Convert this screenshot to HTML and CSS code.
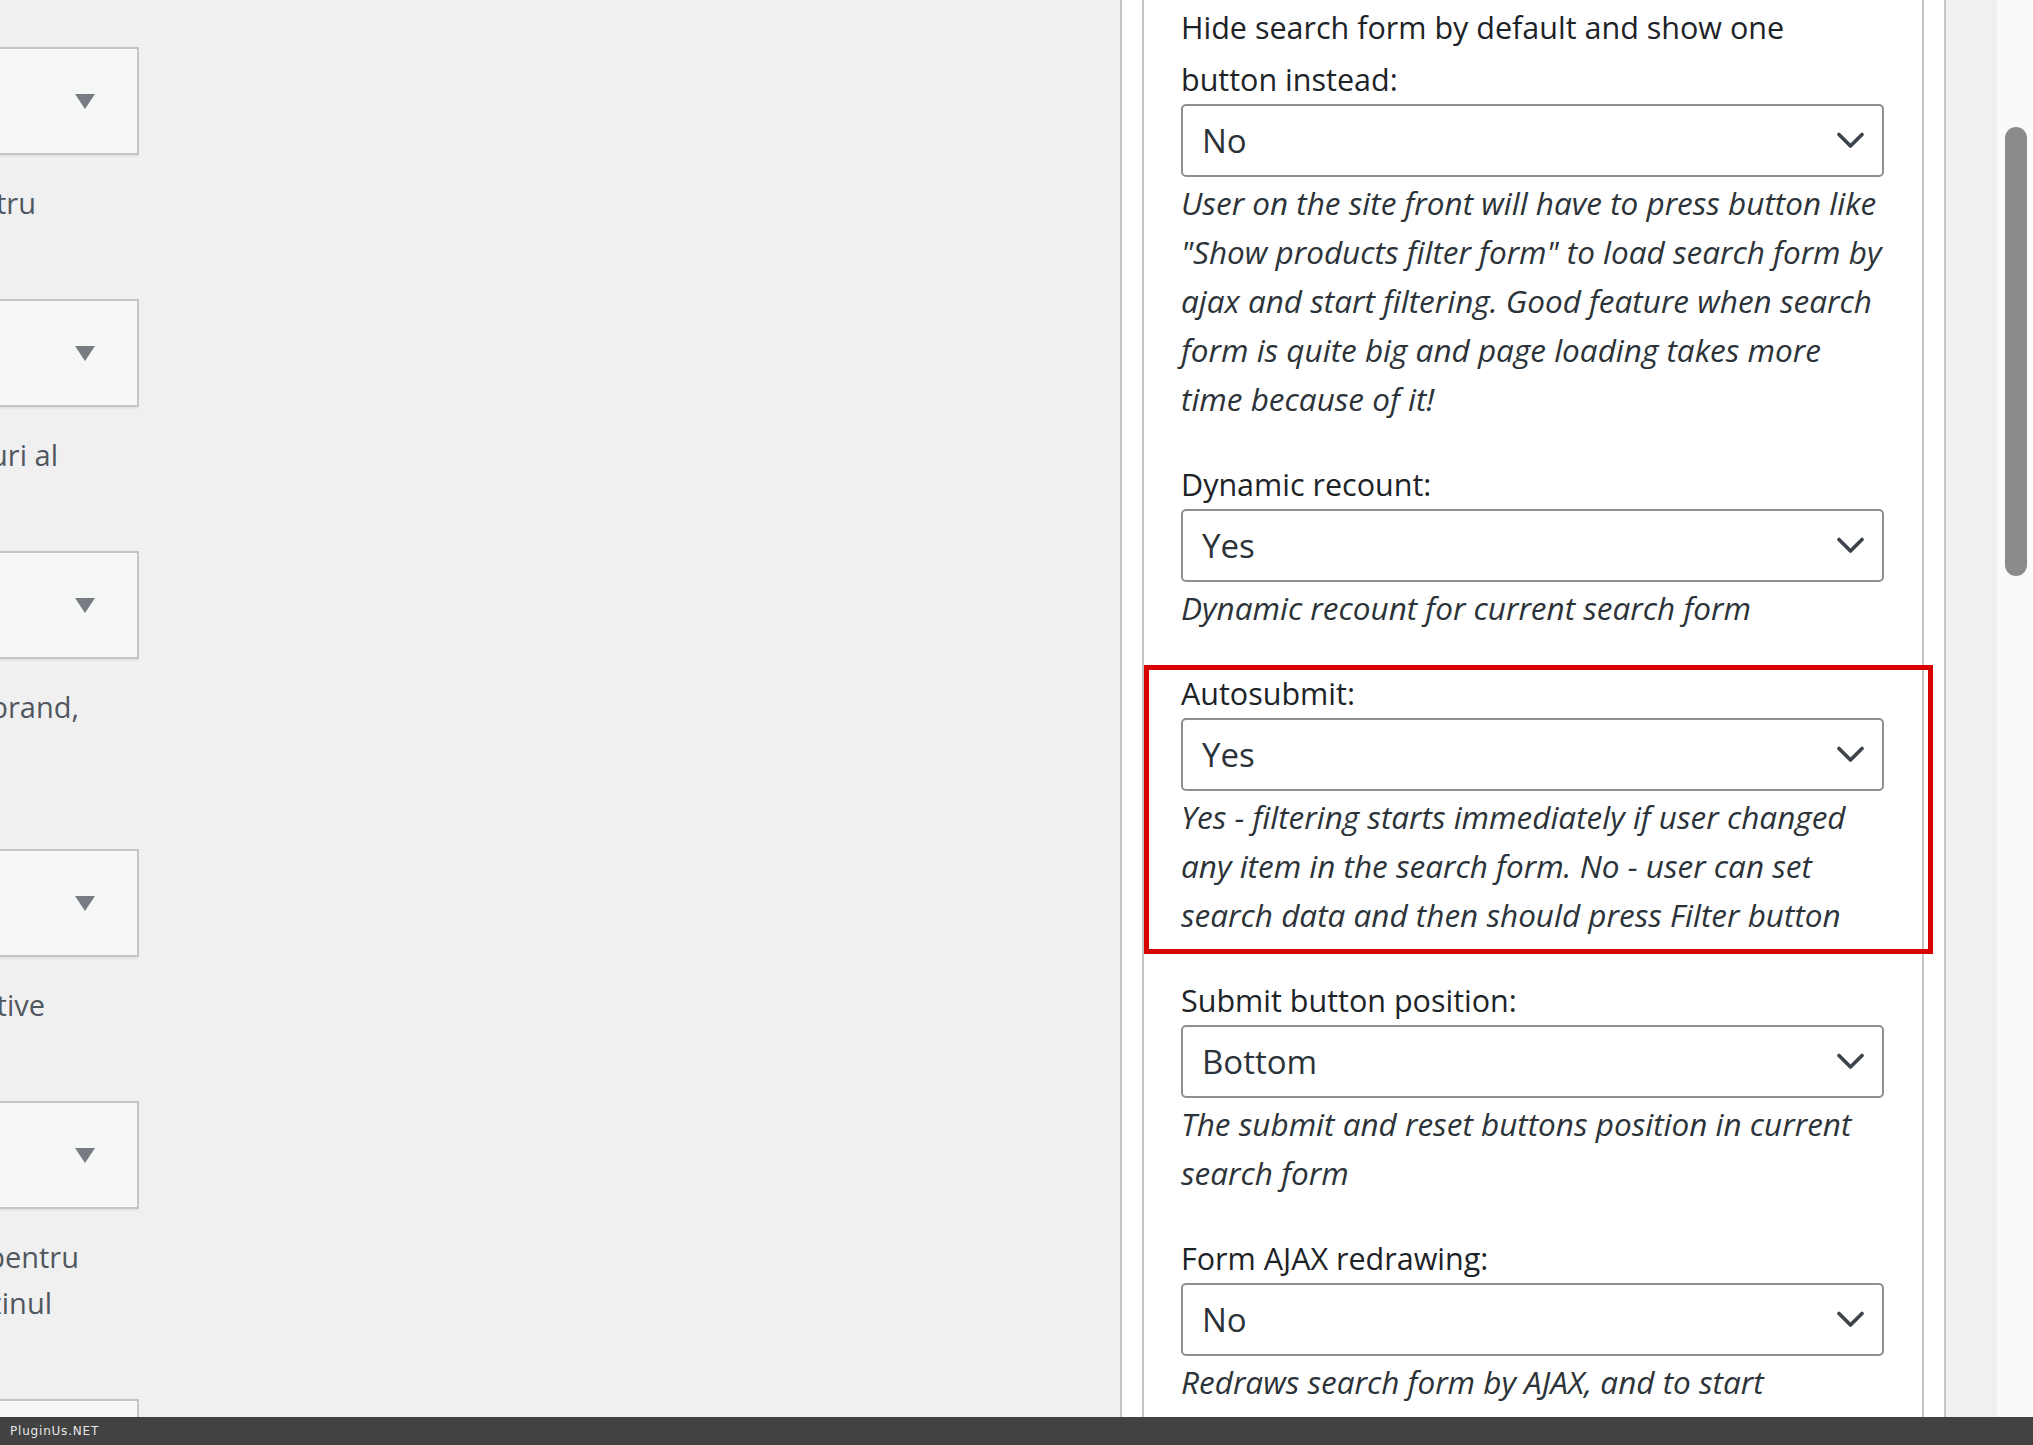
FILE: index.html
```html
<!DOCTYPE html>
<html lang="en">
<head>
<meta charset="utf-8">
<title>Search form settings</title>
<link rel="stylesheet" href="styles.css">
</head>
<body>
<div class="screen">
  <div class="page">
    <aside class="left-col">
      <div class="lsel"><span class="lsel-arrow"></span></div>
      <div class="note"><div class="note-line end-36">pentru</div></div>

      <div class="lsel"><span class="lsel-arrow"></span></div>
      <div class="note"><div class="note-line end-58">produsuri al</div></div>

      <div class="lsel"><span class="lsel-arrow"></span></div>
      <div class="note two-lines"><div class="note-line end-79">brand,</div></div>

      <div class="lsel"><span class="lsel-arrow"></span></div>
      <div class="note"><div class="note-line end-45">alternative</div></div>

      <div class="lsel"><span class="lsel-arrow"></span></div>
      <div class="note"><div class="note-line end-79">pentru</div><div class="note-line end-52">magazinul</div></div>

      <div class="lsel"><span class="lsel-arrow"></span></div>
    </aside>

    <main class="panel">
      <div class="panel-inner">
        <div class="field">
          <label class="field-label">Hide search form by default and show one button instead:</label>
          <div class="select"><span>No</span><svg class="chevron" viewBox="0 0 27 17"><polyline points="2,2.5 13.5,14 25,2.5"/></svg></div>
          <p class="field-desc">User on the site front will have to press button like<br>"Show products filter form" to load search form by<br>ajax and start filtering. Good feature when search<br>form is quite big and page loading takes more<br>time because of it!</p>
        </div>

        <div class="field">
          <label class="field-label">Dynamic recount:</label>
          <div class="select"><span>Yes</span><svg class="chevron" viewBox="0 0 27 17"><polyline points="2,2.5 13.5,14 25,2.5"/></svg></div>
          <p class="field-desc">Dynamic recount for current search form</p>
        </div>

        <div class="field">
          <label class="field-label">Autosubmit:</label>
          <div class="select"><span>Yes</span><svg class="chevron" viewBox="0 0 27 17"><polyline points="2,2.5 13.5,14 25,2.5"/></svg></div>
          <p class="field-desc">Yes - filtering starts immediately if user changed<br>any item in the search form. No - user can set<br>search data and then should press Filter button</p>
          <div class="highlight"></div>
        </div>

        <div class="field">
          <label class="field-label">Submit button position:</label>
          <div class="select"><span>Bottom</span><svg class="chevron" viewBox="0 0 27 17"><polyline points="2,2.5 13.5,14 25,2.5"/></svg></div>
          <p class="field-desc">The submit and reset buttons position in current<br>search form</p>
        </div>

        <div class="field">
          <label class="field-label">Form AJAX redrawing:</label>
          <div class="select"><span>No</span><svg class="chevron" viewBox="0 0 27 17"><polyline points="2,2.5 13.5,14 25,2.5"/></svg></div>
          <p class="field-desc">Redraws search form by AJAX, and to start</p>
        </div>
      </div>
    </main>
  </div>

  <div class="scroll-track"><div class="scroll-thumb"></div></div>
</div>

<footer class="admin-bar">PluginUs.NET</footer>
</body>
</html>
```

FILE: styles.css
```css
* { box-sizing: border-box; }

html, body {
  margin: 0;
  height: 100%;
}

body {
  background: #f0f0f1;
  font-family: "Open Sans", "Noto Sans", sans-serif;
  overflow: hidden;
}

.screen {
  display: flex;
  height: 1445px;
}

.page {
  flex: 1;
  display: flex;
  overflow: hidden;
}

/* ---------- left (cropped) column ---------- */
.left-col {
  width: 139px;
  flex: none;
  overflow: hidden;
  padding-top: 47px;
}

.lsel {
  height: 108px;
  margin-left: -160px;
  background: #f6f7f7;
  border: 2px solid #c3c4c7;
  box-shadow: 0 2px 2px rgba(0, 0, 0, 0.05);
  display: flex;
  align-items: center;
  justify-content: flex-end;
  padding-right: 42px;
}

.lsel-arrow {
  width: 0;
  height: 0;
  border-left: 10px solid transparent;
  border-right: 10px solid transparent;
  border-top: 15px solid #787c82;
  margin-top: 1px;
}

.note {
  margin: 25px 0 73px;
  font-size: 29px;
  line-height: 46px;
  color: #50575e;
}

.note.two-lines { min-height: 92px; }

.note-line {
  display: flex;
  justify-content: flex-end;
  white-space: nowrap;
}

.end-36 { padding-right: 103px; }
.end-45 { padding-right: 94px; }
.end-52 { padding-right: 87px; }
.end-58 { padding-right: 81px; }
.end-79 { padding-right: 60px; }

/* ---------- settings panel ---------- */
.panel {
  margin-left: 981px;
  width: 826px;
  flex: none;
  background: #fff;
  border-left: 2px solid #c3c4c7;
  border-right: 2px solid #c3c4c7;
  padding: 0 20px;
}

.panel-inner {
  height: 100%;
  border-left: 2px solid #c3c4c7;
  border-right: 2px solid #c3c4c7;
  padding: 2px 38px 0 37px;
  display: flex;
  flex-direction: column;
  gap: 36px;
}

.field {
  position: relative;
}

.field-label {
  display: block;
  font-size: 30.5px;
  line-height: 51.5px;
  color: #1d2327;
}

.select {
  margin-top: -1px;
  height: 73px;
  border: 2px solid #8c8f94;
  border-radius: 5px;
  background: #fff;
  display: flex;
  align-items: center;
  justify-content: space-between;
  padding: 0 18px 0 19px;
  font-size: 33px;
  color: #2c3338;
}

.chevron {
  width: 27px;
  height: 17px;
  fill: none;
  stroke: #3c434a;
  stroke-width: 3.6;
  stroke-linecap: round;
  stroke-linejoin: round;
}

.field-desc {
  margin: 0.5px 0 0;
  font-style: italic;
  font-size: 31.5px;
  line-height: 49px;
  white-space: nowrap;
  color: #2c3338;
}

/* red annotation frame drawn over the Autosubmit option */
.highlight {
  position: absolute;
  left: -37px;
  right: -49px;
  top: -3px;
  bottom: -15px;
  border: 5px solid #d70000;
  pointer-events: none;
}

/* ---------- scrollbar ---------- */
.scroll-track {
  width: 36px;
  flex: none;
  background: #fafafa;
  padding: 127px 6px 0 8px;
}

.scroll-thumb {
  height: 449px;
  border-radius: 11px;
  background: #8b8b8b;
}

/* ---------- bottom admin bar ---------- */
.admin-bar {
  position: fixed;
  left: 0;
  right: 0;
  bottom: 0;
  height: 28px;
  background: #424242;
  color: #e6e6e6;
  font-family: "DejaVu Sans", sans-serif;
  font-size: 12px;
  letter-spacing: 0.8px;
  padding-left: 10px;
  display: flex;
  align-items: center;
}
```
